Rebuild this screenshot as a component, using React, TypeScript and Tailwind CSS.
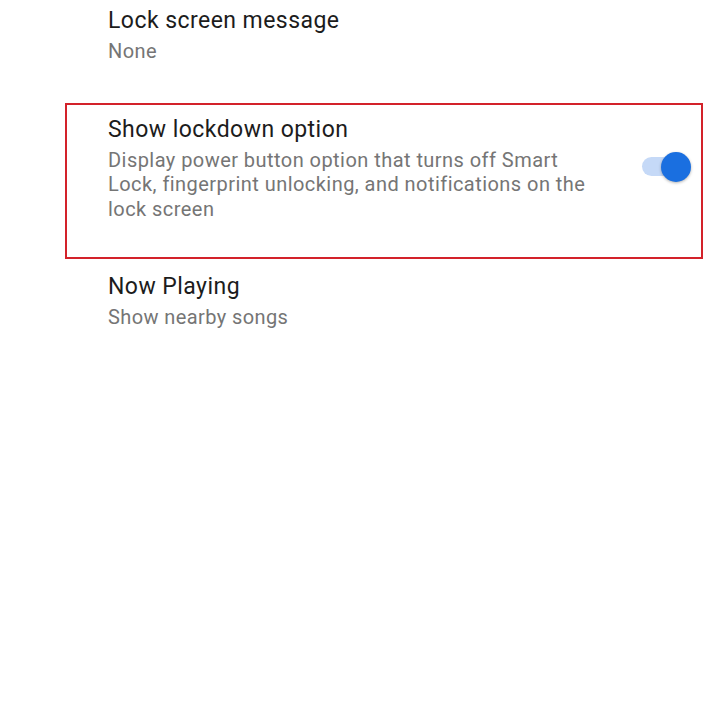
import React from "react";

export default function App() {
  return (
    <div className="w-[720px] h-[720px] bg-white overflow-hidden" style={{ fontFamily: "Roboto, 'Noto Sans', sans-serif" }}>
      <div className="pl-[108px] pt-[5.5px] pb-[2px]">
        <div className="text-[23px] leading-[30px] tracking-[0.45px] text-[#1c1c1c]">Lock screen message</div>
        <div className="text-[20px] leading-[30px] tracking-[0.4px] text-[#757575]">None</div>
      </div>

      <div className="mt-[35.5px] ml-[65px] w-[638px] border-2 border-[#d3222a] flex justify-between items-start">
        <div className="pl-[41px] pt-[10px] pb-[36px]">
          <div className="text-[23px] leading-[30px] tracking-[0.45px] text-[#1c1c1c]">Show lockdown option</div>
          <div className="mt-[2.5px] w-[490px] text-[20px] leading-[24.5px] tracking-[0.45px] text-[#757575]">
            Display power button option that turns off Smart Lock, fingerprint unlocking, and notifications on the lock screen
          </div>
        </div>
        <div className="mt-[46.5px] mr-[10px] relative w-[50px] h-[30px] flex items-center">
          <div className="ml-[1px] w-[46px] h-[19px] rounded-full bg-[#c5d9f7]"></div>
          <div className="absolute right-0 top-0 w-[30px] h-[30px] rounded-full bg-[#1a6fe0] shadow-[0_1px_3px_rgba(0,0,0,0.3)]"></div>
        </div>
      </div>

      <div className="pl-[108px] mt-[13px]">
        <div className="text-[23px] leading-[30px] tracking-[0.45px] text-[#1c1c1c]">Now Playing</div>
        <div className="text-[20px] leading-[30px] tracking-[0.4px] text-[#757575]">Show nearby songs</div>
      </div>
    </div>
  );
}
